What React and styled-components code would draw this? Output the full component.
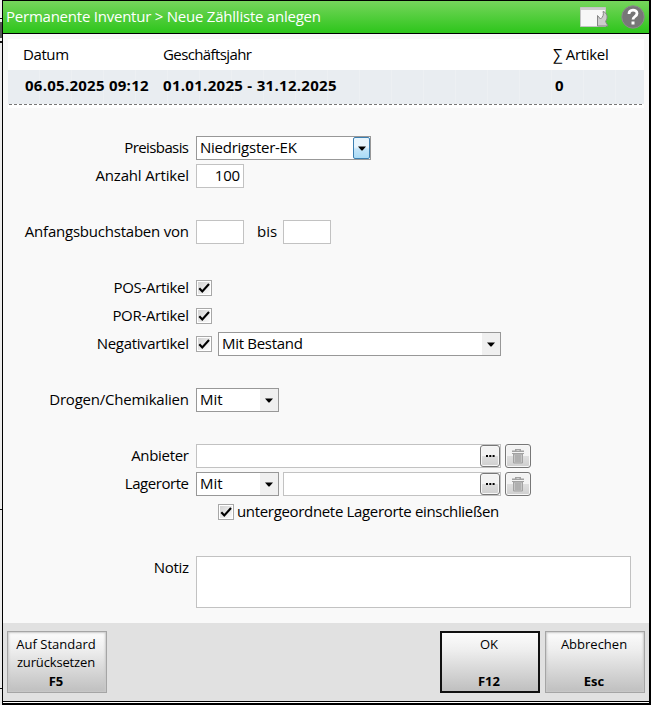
import React from "react";
import styled, { createGlobalStyle } from "styled-components";

const Global = createGlobalStyle`
  * { box-sizing: border-box; }
  html, body { margin: 0; padding: 0; background: #fff; }
  body { font-family: "Open Sans", "Noto Sans", sans-serif; font-size: 15px; color: #000; }
  button, input, textarea { font: inherit; color: inherit; }
`;

const Screen = styled.div`
  width: 651px;
  height: 705px;
  padding-left: 2px;
  background: linear-gradient(#f0f0f0 0 18px, #111 18px 19px, #f0f0f0 19px 22px, #555 22px 38px, #f0f0f0 38px 41px, #111 41px 43px, #ececec 43px 509px, #111 509px 510px, #ececec 510px 688px, #111 688px 689px, #ececec 689px);
  overflow: hidden;
`;
const Dialog = styled.main`
  display: flex;
  flex-direction: column;
  height: 705px;
  border: solid #000;
  border-width: 1px 2px 2px 1px;
  background: #f9f9f9;
`;
const TitleBar = styled.header`
  flex: none;
  display: flex;
  align-items: center;
  height: 33px;
  padding: 0 4px 0 3px;
  border-bottom: 1px solid #000;
  background: linear-gradient(#76d55c, #2dc51b);
  color: #fff;
`;
const Title = styled.h1`
  flex: 1;
  margin: 0;
  font-size: 15px;
  font-weight: 400;
  line-height: 30px;
  height: 32px;
`;
const Label = styled.span`
  display: inline-block;
  white-space: nowrap;
  letter-spacing: ${(p) => p.$ls || 0}px;
  margin-right: ${(p) => -(p.$ls || 0)}px;
`;
const WindowIcon = styled.svg`
  display: block;
  margin-right: 12px;
`;
const HelpIcon = styled.svg`
  display: block;
`;
const Summary = styled.section`
  flex: none;
  margin: 5px 5px 0 5px;
  height: 69px;
  background: #fff;
`;
const SummaryRow = styled.div`
  display: grid;
  grid-template-columns: 155px 390px 1fr;
  height: ${(p) => (p.$values ? 34 : 31)}px;
  line-height: ${(p) => (p.$values ? 30 : 31)}px;
  font-weight: ${(p) => (p.$values ? 700 : 400)};
  background: ${(p) =>
    p.$values ? "repeating-linear-gradient(90deg, #e9edf1 0 31px, #edf0f3 31px 32px)" : "#fff"};
`;
const Cell = styled.div`
  padding-left: ${(p) => p.$pad || 0}px;
`;
const DashRule = styled.div`
  height: 1px;
  margin-left: 1px;
  background: repeating-linear-gradient(90deg, #777 0 3px, #fff 3px 5px);
`;
const Form = styled.form`
  flex: 1;
  padding-top: 28px;
`;
const Row = styled.div`
  display: grid;
  grid-template-columns: 186px auto;
  column-gap: 7px;
  height: ${(p) => p.$h || 24}px;
  margin-bottom: ${(p) => p.$after || 4}px;
  line-height: 23px;
`;
const RowLabel = styled.label`
  text-align: right;
  white-space: nowrap;
`;
const Controls = styled.div`
  display: flex;
  align-items: center;
`;
const Field = styled.div`
  display: flex;
  justify-content: ${(p) => (p.$right ? "flex-end" : "flex-start")};
  width: ${(p) => p.$w}px;
  height: 24px;
  margin-right: 4px;
  padding: ${(p) => (p.$button ? 0 : "0 3px")};
  border: 1px solid #c2c2c2;
  background: #fff;
  line-height: 21px;
`;
const Between = styled.span`
  width: 35px;
  height: 24px;
  padding-left: 9px;
`;
const CheckText = styled.span`
  height: 24px;
`;
const SelectBox = styled.div`
  display: flex;
  justify-content: space-between;
  width: ${(p) => p.$w}px;
  height: 24px;
  margin-right: 4px;
  padding-left: 3px;
  border: 1px solid #989898;
  background: #fff;
  line-height: 21px;
`;
const Arrow = styled.span`
  display: grid;
  place-items: center;
  width: ${(p) => (p.$hot ? 17 : 18)}px;
  height: 22px;
  border: ${(p) => (p.$hot ? "1px solid #3c7fb1" : "0")};
  border-radius: ${(p) => (p.$hot ? 2 : 0)}px;
  background: ${(p) => (p.$hot ? "linear-gradient(#e8f5fd 0 45%, #c4e5f9 55%, #a9dbf6)" : "#f0f0f0")};
`;
const CheckBox = styled.span`
  display: grid;
  place-items: center;
  width: 16px;
  height: 16px;
  margin-right: ${(p) => p.$gap || 6}px;
  margin-left: ${(p) => p.$indent || 0}px;
  border: 1px solid #a8a8a8;
  background: linear-gradient(135deg, #cfcfcf, #fff);
  box-shadow: inset 0 0 0 1px #fff;
`;
const SmallButton = styled.button`
  display: grid;
  place-items: center;
  width: ${(p) => p.$w}px;
  height: ${(p) => p.$h}px;
  margin: 0 0 0 ${(p) => (p.$end ? "auto" : "0")};
  padding: 0;
  border: 1px solid #777;
  border-radius: 3px;
  background: linear-gradient(#f3f3f3 0 48%, #dedede 52%, #cfcfcf);
  box-shadow: inset 0 0 0 1px #f7f7f7;
`;
const Note = styled.div`
  width: 435px;
  height: 52px;
  border: 1px solid #c2c2c2;
  background: #fff;
`;
const Footer = styled.footer`
  flex: none;
  display: flex;
  gap: 5px;
  height: 78px;
  padding: 8px 4px 8px 4px;
  background: #e1e1e1;
`;
const BottomLine = styled.div`
  flex: none;
  height: 2px;
  border-top: 1px solid #000;
  background: #fff;
`;
const Spacer = styled.div`
  flex: 1;
`;
const ActionButton = styled.button`
  display: flex;
  flex-direction: column;
  align-items: center;
  width: 100px;
  height: 62px;
  padding: ${(p) => (p.$primary ? 2 : 3)}px 2px 0 0;
  border: ${(p) => (p.$primary ? "2px solid #111" : "1px solid #a5a5a5")};
  box-shadow: ${(p) => (p.$primary ? "none" : "inset 0 0 2px 1px #c9c9c9")};
  background: linear-gradient(#fcfcfc, #eee 30%, #bfbfbf);
  font-size: 13px;
  line-height: 18px;
`;
const Shortcut = styled.strong`
  margin-top: auto;
  margin-bottom: ${(p) => (p.$primary ? 1 : 2)}px;
  line-height: 18px;
`;

const Caret = () => (
  <svg width="8" height="5" viewBox="0 0 8 5"><path d="M0 .5h8L4.5 4.5h-1z" /></svg>
);
const Check = () => (
  <svg width="14" height="14" viewBox="0 0 14 14"><path d="M2.3 7.2l3 3.3L12 3" fill="none" stroke="#000" strokeWidth="2.1" /></svg>
);
const Trash = () => (
  <svg width="14" height="16" viewBox="0 0 14 16">
    <path d="M4 1h6v1.5h3V4H1V2.5h3z" fill="#a2a2a2" />
    <path d="M5.5 2h3v.8h-3z" fill="#ddd" />
    <path d="M1 5h12v1H1z" fill="#a2a2a2" />
    <path d="M2.5 6v9h9V6z" fill="#c6c6c6" stroke="#a2a2a2" />
    <path d="M5 7v7M7 7v7M9 7v7" stroke="#999" />
  </svg>
);
const Dots = () => (
  <svg width="9" height="2" viewBox="0 0 9 2"><path d="M0 0h2v2H0zM3.3 0h2v2h-2zM6.6 0h2v2h-2z" /></svg>
);

function Select({ text, width, hot, ls }) {
  return (
    <SelectBox $w={width}>
      <Label $ls={ls}>{text}</Label>
      <Arrow $hot={hot}><Caret /></Arrow>
    </SelectBox>
  );
}
function FormRow({ label, ls, after, height, children }) {
  return (
    <Row $after={after} $h={height}>
      <RowLabel><Label $ls={ls}>{label}</Label></RowLabel>
      <Controls>{children}</Controls>
    </Row>
  );
}
function Lookup({ width }) {
  return (
    <>
      <Field $w={width} $button>
        <SmallButton type="button" $w={20} $h={22} $end aria-label="Auswählen"><Dots /></SmallButton>
      </Field>
      <SmallButton type="button" $w={26} $h={24} aria-label="Löschen"><Trash /></SmallButton>
    </>
  );
}

export default function App() {
  return (
    <Screen>
      <Global />
      <Dialog>
        <TitleBar>
          <Title><Label $ls={-0.23}>Permanente Inventur &gt; Neue Zählliste anlegen</Label></Title>
          <WindowIcon width="29" height="22" viewBox="0 0 29 22">
            <path d="M.5 1.5h25v19H.5z" fill="#f7f7f7" stroke="#c4c4c4" />
            <path d="M1 2h24v2H1z" fill="#ccc" />
            <path d="M23 5.5c4 1 5.5 6 2.5 10l2.5 4.5H17.5V9.5l3 3.5c2.500-2 3.500-4.500 2.500-7.500z" fill="#ccc" stroke="#858585" />
          </WindowIcon>
          <HelpIcon width="24" height="24" viewBox="0 0 24 24">
            <circle cx="12" cy="12" r="11.2" fill="#777" stroke="#8b8b8b" />
            <path d="M8 9c0-5 8-5 8-.5 0 3-4 3-4 6" fill="none" stroke="#fff" strokeWidth="2.8" />
            <path d="M10.500 16.500h3v3h-3z" fill="#fff" />
          </HelpIcon>
        </TitleBar>
        <Summary>
          <SummaryRow>
            <Cell $pad={15}><Label $ls={-0.4}>Datum</Label></Cell>
            <Cell><Label $ls={-0.6}>Geschäftsjahr</Label></Cell>
            <Cell><Label $ls={-0.3}>∑ Artikel</Label></Cell>
          </SummaryRow>
          <SummaryRow $values>
            <Cell $pad={17}><Label $ls={0.26}>06.05.2025 09:12</Label></Cell>
            <Cell><Label $ls={0.3}>01.01.2025 - 31.12.2025</Label></Cell>
            <Cell $pad={2}><Label>0</Label></Cell>
          </SummaryRow>
          <DashRule />
        </Summary>
        <Form>
          <FormRow label="Preisbasis" ls={-0.6}><Select text="Niedrigster-EK" ls={-0.25} width={175} hot /></FormRow>
          <FormRow label="Anzahl Artikel" ls={-0.17} after={32}><Field $w={48} $right><Label $ls={-0.3}>100</Label></Field></FormRow>
          <FormRow label="Anfangsbuchstaben von" ls={-0.22} after={32}>
            <Field $w={48} /><Between><Label>bis</Label></Between><Field $w={48} />
          </FormRow>
          <FormRow label="POS-Artikel" ls={-0.3}><CheckBox><Check /></CheckBox></FormRow>
          <FormRow label="POR-Artikel" ls={-0.3}><CheckBox><Check /></CheckBox></FormRow>
          <FormRow label="Negativartikel" ls={-0.33} after={32}>
            <CheckBox><Check /></CheckBox><Select text="Mit Bestand" ls={-0.3} width={283} />
          </FormRow>
          <FormRow label="Drogen/Chemikalien" ls={-0.22} after={32}><Select text="Mit" width={83} /></FormRow>
          <FormRow label="Anbieter" ls={-0.3}><Lookup width={305} /></FormRow>
          <FormRow label="Lagerorte" ls={-0.45}><Select text="Mit" width={83} /><Lookup width={218} /></FormRow>
          <FormRow label="" after={32}>
            <CheckBox $indent={22} $gap={3}><Check /></CheckBox>
            <CheckText><Label $ls={-0.33}>untergeordnete Lagerorte einschließen</Label></CheckText>
          </FormRow>
          <FormRow label="Notiz" ls={-0.3} height={52}><Note /></FormRow>
        </Form>
        <Footer>
          <ActionButton type="button"><Label>Auf Standard</Label><Label $ls={-0.15}>zurücksetzen</Label><Shortcut>F5</Shortcut></ActionButton>
          <Spacer />
          <ActionButton type="button" $primary><Label>OK</Label><Shortcut $primary>F12</Shortcut></ActionButton>
          <ActionButton type="button"><Label>Abbrechen</Label><Shortcut>Esc</Shortcut></ActionButton>
        </Footer>
        <BottomLine />
      </Dialog>
    </Screen>
  );
}
